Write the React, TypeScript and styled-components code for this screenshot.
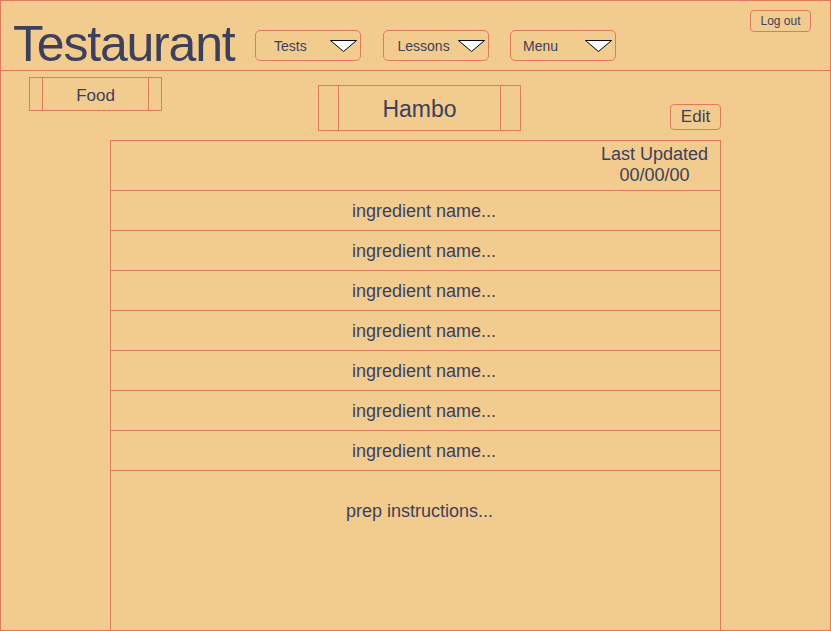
import React from 'react'
import styled, { createGlobalStyle } from 'styled-components'

const sand = '#F2CC8F'
const terracotta = '#E07A5F'
const ink = '#3D405B'

const GlobalStyle = createGlobalStyle`
  html, body {
    margin: 0;
    padding: 0;
    background: ${sand};
  }
  * {
    box-sizing: border-box;
  }
`

const Frame = styled.div`
  width: 831px;
  height: 631px;
  border: 1px solid ${terracotta};
  background: ${sand};
  color: ${ink};
  font-family: 'Liberation Sans', Arial, sans-serif;
  display: flex;
  flex-direction: column;
  overflow: hidden;
`

const Header = styled.header`
  display: flex;
  align-items: flex-start;
  height: 70px;
  flex: 0 0 70px;
  border-bottom: 1px solid ${terracotta};
`

const Brand = styled.h1`
  flex: 0 0 242px;
  margin: 18px 0 0 12px;
  font-size: 50px;
  line-height: 50px;
  font-weight: normal;
  letter-spacing: -1.2px;
  white-space: nowrap;
`

const NavGroup = styled.nav`
  display: flex;
  gap: 21.5px;
  margin-top: 29px;
`

const Dropdown = styled.div<{ $inset: number }>`
  display: flex;
  align-items: center;
  justify-content: space-between;
  width: 106px;
  height: 31px;
  padding: 0 3px 0 ${(p) => p.$inset}px;
  border: 1px solid ${terracotta};
  border-radius: 5px;
  font-size: 14px;
  cursor: pointer;
`

const LogOut = styled.button`
  margin: 9px 19px 0 auto;
  width: 61px;
  height: 22px;
  padding: 0;
  border: 1px solid ${terracotta};
  border-radius: 4px;
  background: transparent;
  color: ${ink};
  font-family: inherit;
  font-size: 12px;
`

const TitleBar = styled.div`
  display: flex;
  align-items: flex-start;
  flex: 0 0 69px;
`

const Process = styled.div<{ $w: number; $h: number; $side: number; $size: number }>`
  display: grid;
  grid-template-columns: ${(p) => p.$side}px 1fr ${(p) => p.$side}px;
  width: ${(p) => p.$w}px;
  height: ${(p) => p.$h}px;
  border: 1px solid ${terracotta};
  font-size: ${(p) => p.$size}px;
`

const ProcessLabel = styled.div`
  display: flex;
  align-items: center;
  justify-content: center;
  padding-top: 3px;
  border-left: 1px solid ${terracotta};
  border-right: 1px solid ${terracotta};
`

const FoodTag = styled.div`
  margin: 6px 0 0 28px;
`

const DishTag = styled.div`
  margin: 14px 0 0 156px;
`

const EditButton = styled.button`
  margin: 33px 0 0 149px;
  width: 51px;
  height: 26px;
  padding: 0;
  border: 1px solid ${terracotta};
  border-radius: 4px;
  background: transparent;
  color: ${ink};
  font-family: inherit;
  font-size: 17px;
`

const Recipe = styled.section`
  flex: 1;
  margin-left: 109px;
  width: 611px;
  border: 1px solid ${terracotta};
  border-bottom: none;
  display: flex;
  flex-direction: column;
`

const MetaRow = styled.div`
  display: flex;
  justify-content: flex-end;
  align-items: center;
  height: 50px;
  padding: 0 12px 2px 0;
  border-bottom: 1px solid ${terracotta};
  font-size: 18px;
  line-height: 21px;
  text-align: center;
`

const IngredientRow = styled.div`
  display: flex;
  align-items: center;
  justify-content: center;
  height: 40px;
  padding: 2px 0 0 17px;
  border-bottom: 1px solid ${terracotta};
  font-size: 18px;
`

const Prep = styled.div`
  flex: 1;
  padding: 30px 0 0 8px;
  text-align: center;
  font-size: 18px;
  line-height: 21px;
`

const Caret = () => (
  <svg width="27" height="12" viewBox="0 0 27 12">
    <polygon points="0.5,0.5 26.5,0.5 13.5,11.5" fill="#fff" stroke="#000" strokeWidth="1" />
  </svg>
)

const nav = [
  { label: 'Tests', inset: 18 },
  { label: 'Lessons', inset: 14 },
  { label: 'Menu', inset: 12 },
]

export default function App() {
  const ingredients = Array.from({ length: 7 }, () => 'ingredient name...')

  return (
    <>
      <GlobalStyle />
      <Frame>
        <Header>
          <Brand>Testaurant</Brand>
          <NavGroup>
            {nav.map((item) => (
              <Dropdown key={item.label} $inset={item.inset}>
                <span>{item.label}</span>
                <Caret />
              </Dropdown>
            ))}
          </NavGroup>
          <LogOut>Log out</LogOut>
        </Header>

        <TitleBar>
          <FoodTag>
            <Process $w={133} $h={34} $side={12} $size={17}>
              <span />
              <ProcessLabel>Food</ProcessLabel>
              <span />
            </Process>
          </FoodTag>
          <DishTag>
            <Process $w={203} $h={46} $side={19} $size={23}>
              <span />
              <ProcessLabel>Hambo</ProcessLabel>
              <span />
            </Process>
          </DishTag>
          <EditButton>Edit</EditButton>
        </TitleBar>

        <Recipe>
          <MetaRow>
            <div>
              Last Updated
              <br />
              00/00/00
            </div>
          </MetaRow>
          {ingredients.map((name, i) => (
            <IngredientRow key={i}>{name}</IngredientRow>
          ))}
          <Prep>prep instructions...</Prep>
        </Recipe>
      </Frame>
    </>
  )
}
